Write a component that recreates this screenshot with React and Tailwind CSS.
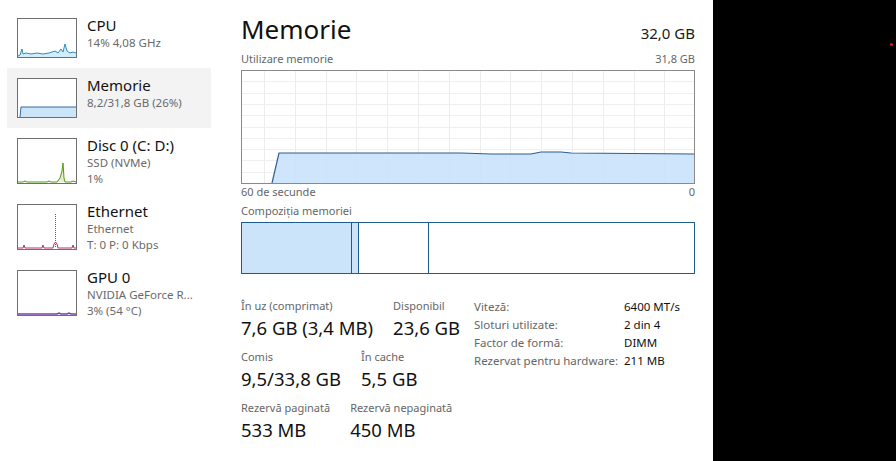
import React from 'react';

const FONT = { fontFamily: '"Noto Sans", "Open Sans", sans-serif' };

// thumbnail drawings for the left list
const Thumb = ({ h, children }) => (
  <svg width="60" height={h} viewBox={`0 0 60 ${h}`} className="shrink-0 block">
    <rect x="0.5" y="0.5" width="59" height={h - 1} fill="#fff" stroke="#6f6f6f" />
    {children}
  </svg>
);

const cpuLine = '1,38 3,37 5,31 6,36 9,35 14,36 20,35 26,36 32,35 38,33 41,35 44,31 46,34 48,26 50,33 53,35 56,34 59,35';

const sidebar = [
  {
    title: 'CPU',
    lines: ['14% 4,08 GHz'],
    h: 40,
    draw: (
      <>
        <polygon points={`${cpuLine} 59,39 1,39`} fill="#d3eefb" />
        <polyline points={cpuLine} fill="none" stroke="#2b8ebf" strokeWidth="1" />
      </>
    ),
  },
  {
    title: 'Memorie',
    lines: ['8,2/31,8 GB (26%)'],
    h: 40,
    selected: true,
    draw: (
      <>
        <polygon points="3,39 4,29 59,29 59,39" fill="#cce4f7" />
        <polyline points="3,39 4,29 59,29" fill="none" stroke="#2e6ba3" strokeWidth="1" />
      </>
    ),
  },
  {
    title: 'Disc 0 (C: D:)',
    lines: ['SSD (NVMe)', '1%'],
    h: 46,
    draw: (
      <polyline points="1,44 6,44 8,43 10,44 30,44 32,43 34,44 40,44 43,40 45,33 46,25 47,40 48,44 54,44 56,43 59,44" fill="#e3f0cf" stroke="#4f9a12" strokeWidth="1" />
    ),
  },
  {
    title: 'Ethernet',
    lines: ['Ethernet', 'T: 0 P: 0 Kbps'],
    h: 46,
    draw: (
      <>
        <line x1="38.5" y1="10" x2="38.5" y2="44" stroke="#b8306b" strokeWidth="1" strokeDasharray="1 1" />
        <polyline points="1,44 6,44 7,41 8,44 25,44 26,41 27,44 36,44 37,40 38.5,38 40,40 41,44 55,44 56,41 57,44 59,44" fill="none" stroke="#b8306b" strokeWidth="1" />
      </>
    ),
  },
  {
    title: 'GPU 0',
    lines: ['NVIDIA GeForce R...', '3% (54 °C)'],
    h: 46,
    draw: (
      <polyline points="1,44 40,44 42,43 44,44 50,44 52,43 54,44 59,44" fill="none" stroke="#7a3fb0" strokeWidth="1.5" />
    ),
  },
];

// memory usage line, in graph coordinates (453 x 113)
const usage = '31,113 38,83 220,83 250,84 290,84 300,82 320,82 330,83 453,84';

const stats = [
  [
    ['În uz (comprimat)', '7,6 GB (3,4 MB)'],
    ['Disponibil', '23,6 GB'],
  ],
  [
    ['Comis', '9,5/33,8 GB'],
    ['În cache', '5,5 GB'],
  ],
  [
    ['Rezervă paginată', '533 MB'],
    ['Rezervă nepaginată', '450 MB'],
  ],
];

const specs = [
  ['Viteză:', '6400 MT/s'],
  ['Sloturi utilizate:', '2 din 4'],
  ['Factor de formă:', 'DIMM'],
  ['Rezervat pentru hardware:', '211 MB'],
];

const UsageGraph = () => {
  const cols = [];
  for (let x = 23; x < 453; x += 30.8) cols.push(x);
  const rows = [];
  for (let i = 1; i < 10; i++) rows.push(i * 11.3);
  return (
    <svg width="454" height="114" viewBox="0 0 454 114" className="block">
      <rect x="0" y="0" width="454" height="114" fill="#fff" />
      {cols.map((x) => (
        <line key={x} x1={Math.round(x) + 0.5} y1="0" x2={Math.round(x) + 0.5} y2="114" stroke="#ececec" />
      ))}
      {rows.map((y) => (
        <line key={y} x1="0" y1={Math.round(y) + 0.5} x2="454" y2={Math.round(y) + 0.5} stroke="#efefef" />
      ))}
      <polygon points={`${usage} 453,113`} fill="#c9e2fb" fillOpacity="0.9" />
      <polyline points={usage} fill="none" stroke="#2d5f8e" strokeWidth="1.2" />
      <rect x="0.5" y="0.5" width="453" height="113" fill="none" stroke="#8a8a8a" />
    </svg>
  );
};

export default function App() {
  return (
    <div className="flex w-[896px] h-[461px] overflow-hidden bg-white text-[#1b1b1b]" style={FONT}>
      {/* left list */}
      <div className="w-[211px] shrink-0 pt-[8px] pl-[7px]">
        {sidebar.map((item) => (
          <div
            key={item.title}
            className={`flex items-start gap-[10px] pl-[10px] pt-[10px] ${item.h === 46 ? 'h-[66px]' : 'h-[60px]'} ${item.selected ? 'bg-[#f3f3f3]' : ''}`}
          >
            <Thumb h={item.h}>{item.draw}</Thumb>
            <div className="-mt-[3px] whitespace-nowrap">
              <div className="text-[15px] leading-[20px] text-[#111]">{item.title}</div>
              {item.lines.map((l) => (
                <div key={l} className="text-[11.5px] leading-[16px] text-[#6a6a6a]">{l}</div>
              ))}
            </div>
          </div>
        ))}
      </div>

      {/* main panel */}
      <div className="w-[502px] shrink-0 pl-[30px] pr-[18px]">
        <div className="flex items-end justify-between h-[48px] pb-[2px]">
          <div className="text-[26px] leading-[34px] text-[#111]">Memorie</div>
          <div className="text-[15px] leading-[20px] pb-[3px]">32,0 GB</div>
        </div>
        <div className="flex justify-between h-[22px] items-center text-[11px] text-[#666]">
          <span>Utilizare memorie</span>
          <span>31,8 GB</span>
        </div>
        <UsageGraph />
        <div className="flex justify-between h-[16px] items-center text-[11px] text-[#666]">
          <span>60 de secunde</span>
          <span>0</span>
        </div>
        <div className="h-[22px] flex items-center text-[11px] text-[#666]">Compoziția memoriei</div>
        <div className="flex h-[52px] border border-[#1f5a8c]">
          <div className="w-[110px] bg-[#cce4f9] border-r border-[#1f5a8c]" />
          <div className="w-[7px] bg-[#cce4f9] border-r border-[#1f5a8c]" />
          <div className="w-[70px] border-r border-[#1f5a8c]" />
          <div className="flex-1" />
        </div>

        <div className="flex mt-[24px]">
          <div className="flex flex-col gap-[8px]">
            {stats.map((row, i) => (
              <div key={i} className="flex gap-[20px] whitespace-nowrap">
                {row.map(([label, value]) => (
                  <div key={label}>
                    <div className="text-[11px] leading-[16px] text-[#666]">{label}</div>
                    <div className="mt-[1px] text-[18.5px] leading-[26px] text-[#111]">{value}</div>
                  </div>
                ))}
              </div>
            ))}
          </div>
          <div className="ml-auto w-[221px] whitespace-nowrap">
            {specs.map(([k, v]) => (
              <div key={k} className="flex h-[18px] items-center text-[11.5px]">
                <span className="w-[150px] text-[#666]">{k}</span>
                <span className="text-[#111]">{v}</span>
              </div>
            ))}
          </div>
        </div>
      </div>

      {/* dark area */}
      <div className="relative flex-1 bg-black">
        <div className="absolute left-[177px] top-[43px] w-[3px] h-[3px] bg-[#d42020] rounded-full" />
      </div>
    </div>
  );
}
